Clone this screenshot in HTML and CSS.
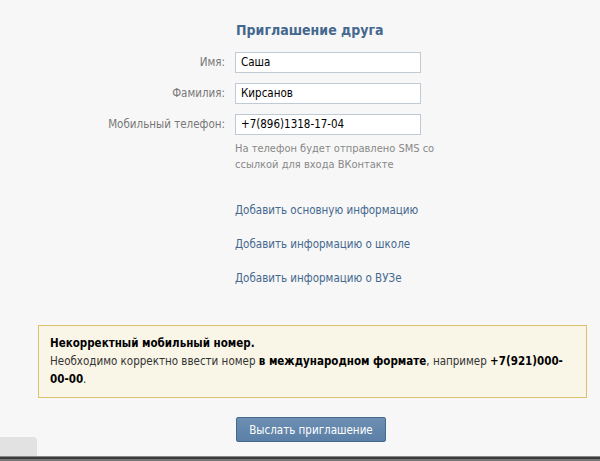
FILE: index.html
```html
<!DOCTYPE html>
<html lang="ru">
<head>
<meta charset="utf-8">
<title>Приглашение друга</title>
<link rel="stylesheet" href="styles.css">
</head>
<body>
<div class="page">
  <div class="form">
    <div></div>
    <h1 class="title">Приглашение друга</h1>

    <label class="label">Имя:</label>
    <div class="field">Саша</div>

    <label class="label">Фамилия:</label>
    <div class="field">Кирсанов</div>

    <label class="label">Мобильный телефон:</label>
    <div class="field">+7(896)1318-17-04</div>

    <div></div>
    <p class="hint">На телефон будет отправлено SMS со ссылкой для входа ВКонтакте</p>

    <div></div>
    <ul class="links">
      <li><a href="#">Добавить основную информацию</a></li>
      <li><a href="#">Добавить информацию о школе</a></li>
      <li><a href="#">Добавить информацию о ВУЗе</a></li>
    </ul>
  </div>

  <div class="error">
    <div class="error-title">Некорректный мобильный номер.</div>
    <div class="error-text">Необходимо корректно ввести номер <b>в международном формате</b>, например <b>+7(921)000-00-00</b>.</div>
  </div>

  <div class="actions">
    <button class="btn">Выслать приглашение</button>
  </div>
</div>
<div class="footer">
  <div class="tab"></div>
  <div class="bar"></div>
</div>
</body>
</html>
```

FILE: styles.css
```css
* { box-sizing: border-box; }
html, body { margin: 0; padding: 0; }
body {
  background: #f7f7f7;
  font-family: "DejaVu Sans Condensed", "DejaVu Sans", Tahoma, sans-serif;
  font-size: 11px;
  color: #000;
  width: 600px;
  height: 461px;
  overflow: hidden;
  position: relative;
}
.page {
  padding-top: 21px;
}
.form {
  display: grid;
  grid-template-columns: 225px 186px;
  column-gap: 10px;
  row-gap: 10px;
  align-items: center;
}
.title {
  margin: 0 0 3px 1px;
  font-size: 14px;
  font-weight: bold;
  color: #45688e;
  line-height: 18px;
  white-space: nowrap;
}
.label {
  text-align: right;
  color: #777;
  line-height: 21px;
  font-size: 11.5px;
}
.field {
  height: 21px;
  background: #fff;
  border: 1px solid #c0cad5;
  padding: 0 5px;
  line-height: 19px;
  color: #000;
  font-size: 11.5px;
}
.hint {
  margin: -4px -20px 0 0;
  color: #888;
  line-height: 16px;
  width: 200px;
}
.links {
  list-style: none;
  margin: 19px 0 0 0;
  padding: 0;
  white-space: nowrap;
}
.links li { line-height: 16px; margin-bottom: 17px; }
.links li:last-child { margin-bottom: 0; }
.links a {
  color: #45688e;
  text-decoration: none;
  font-size: 11.5px;
}
.error {
  margin: 38px 13px 0 38px;
  border: 1px solid #d9c26b;
  background: #f9f6e7;
  padding: 8px 20px 9px 11px;
  line-height: 18px;
  color: #333;
  font-size: 11.5px;
}
.error-title { font-weight: bold; color: #000; font-size: 11.5px; }
.error-text b { color: #000; font-size: 11.5px; }
.actions {
  margin-top: 19px;
  padding-left: 236px;
}
.btn {
  width: 150px;
  height: 25px;
  border: 1px solid #45688e;
  border-radius: 2px;
  background: linear-gradient(#6d8fb3, #5b7fa6);
  color: #fff;
  font-family: inherit;
  font-size: 11.5px;
  padding: 0;
  cursor: pointer;
}
.footer {
  position: absolute;
  left: 0;
  right: 0;
  bottom: 0;
}
.tab {
  width: 37px;
  height: 19px;
  background: #e2e2e2;
  border-top-right-radius: 4px;
}
.bar {
  height: 5px;
  border-top: 1px solid #888;
  background: #3a3a3a;
  border-bottom: 2px solid #777;
}
```
